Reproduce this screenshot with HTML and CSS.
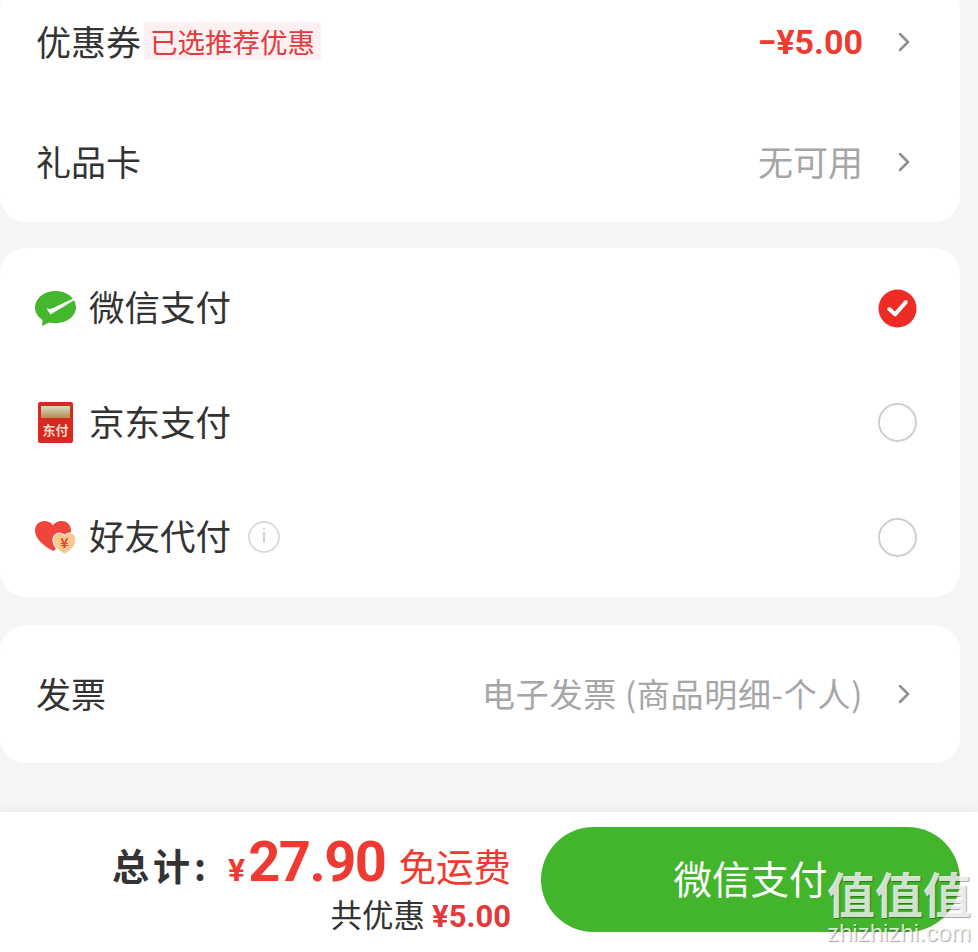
FILE: index.html
```html
<!DOCTYPE html>
<html lang="zh-CN">
<head>
    <meta charset="UTF-8">
    <meta name="viewport" content="width=device-width, initial-scale=1.0">
    <title>确认订单</title>
    <link rel="stylesheet" href="styles.css">
</head>
<body>

    <main class="content">
        <section class="card card-top">
            <div class="row row-tall">
                <span class="label">优惠券</span>
                <span class="tag">已选推荐优惠</span>
                <span class="value value-red">−¥5.00</span>
                <svg class="chevron" viewBox="0 0 12 20"><path d="M2 2l8 8-8 8"/></svg>
            </div>
            <div class="row row-tall">
                <span class="label">礼品卡</span>
                <span class="value value-gray">无可用</span>
                <svg class="chevron" viewBox="0 0 12 20"><path d="M2 2l8 8-8 8"/></svg>
            </div>
        </section>

        <section class="card card-pay">
            <div class="row row-pay">
                <svg class="pay-icon" viewBox="0 0 41 35">
                    <path fill="#44b72f" d="M20.500 0C9 0 0 7.300 0 16.500c0 5 2.900 9.500 7.500 12.500L7 35l7.200-3.600c2 .5 4.100.8 6.300.8C32 32.200 41 25 41 16.500 41 7.300 32 0 20.500 0z"/>
                    <path fill="#fff" d="M11.500 17.500l4.500.5 22-10.500 1.500 1.500-24 14.500z"/>
                </svg>
                <span class="label pay-label">微信支付</span>
                <svg class="radio" viewBox="0 0 40 40">
                    <circle cx="20" cy="20" r="19.500" fill="#ee2c24"/>
                    <path fill="none" stroke="#fff" stroke-width="4" stroke-linecap="round" stroke-linejoin="round" d="M11.500 20.500l6 5.500 11-12.500"/>
                </svg>
            </div>
            <div class="row row-pay">
                <div class="jd-icon">
                    <div class="jd-band"></div>
                    <span class="jd-text">东付</span>
                </div>
                <span class="label pay-label">京东支付</span>
                <span class="radio radio-off"></span>
            </div>
            <div class="row row-pay">
                <div class="heart-icon">
                    <svg viewBox="0 0 41 35">
                        <path fill="#f0453c" d="M18 31C9 26 0 19 0 10.500 0 4.500 4.500 1 9.500 1 13 1 16.500 2.500 18 5.500 19.500 2.500 23 1 26.500 1 32 1 36 5 36 10.500 36 19 27 26 18 31z"/>
                        <path fill="#fbc78e" stroke="#fff" stroke-width="1.200" d="M29.500 34.500C24 31.500 18 27 18 20c0-4.500 3-7 6.500-7 2 0 4 1 5 2.500 1-1.500 3-2.500 5-2.500 3.500 0 6.500 2.500 6.500 7 0 7-6 11.500-11.500 14.500z"/>
                    </svg>
                    <span class="heart-yen">¥</span>
                </div>
                <span class="label pay-label">好友代付</span>
                <span class="info">i</span>
                <span class="radio radio-off"></span>
            </div>
        </section>

        <section class="card card-invoice">
            <div class="row row-invoice">
                <span class="label">发票</span>
                <span class="value value-invoice">电子发票 (商品明细-个人)</span>
                <svg class="chevron" viewBox="0 0 12 20"><path d="M2 2l8 8-8 8"/></svg>
            </div>
        </section>
    </main>

    <footer class="bottom-bar">
        <div class="summary">
            <div class="total-line">
                <span class="total-label">总计:</span>
                <span class="total-yen">¥</span>
                <span class="total-num">27.90</span>
                <span class="total-free">免运费</span>
            </div>
            <div class="saved-line">
                <span>共优惠</span>
                <span class="saved-num">¥5.00</span>
            </div>
        </div>
        <button class="pay-btn">微信支付</button>
    </footer>

    <div class="watermark">
        <div class="watermark-big">值值值</div>
        <div class="watermark-small">zhizhizhi.com</div>
    </div>

</body>
</html>
```

FILE: styles.css
```css
* {
    box-sizing: border-box;
}

html, body {
    height: 100%;
}

body {
    font-family: "Noto Sans CJK SC", "Noto Sans", sans-serif;
    margin: 0;
    background-color: #f5f5f5;
    color: #333;
    display: flex;
    flex-direction: column;
    overflow: hidden;
}

.content {
    flex: 1;
    min-height: 0;
    padding-right: 18px;
}

.card {
    background-color: #fff;
    border-radius: 26px;
    margin-bottom: 28px;
}

.card-top {
    margin-top: -18px;
    margin-bottom: 26px;
}

.card-pay {
    padding: 3px 0 2.500px;
}

.row {
    display: flex;
    align-items: center;
    padding: 0 50px 0 36px;
}

.row-tall {
    height: 120px;
}

.row-pay {
    height: 114.500px;
    padding: 0 43px 0 35px;
}

.row-invoice {
    height: 138px;
}

.label {
    font-size: 35px;
    line-height: 1.2;
    padding-bottom: 3px;
    color: #333;
}

.pay-label {
    font-size: 35.500px;
    margin-left: 13px;
}

.tag {
    margin-left: 3px;
    margin-bottom: 3px;
    padding: 0 6px;
    height: 38px;
    line-height: 38px;
    font-size: 27.500px;
    color: #e33b3f;
    background-color: #fdf0f0;
    white-space: nowrap;
}

.value {
    margin-left: auto;
    margin-right: 35px;
    padding-bottom: 3px;
    white-space: nowrap;
}

.value-red {
    font-family: Roboto, sans-serif;
    font-size: 34px;
    font-weight: 700;
    padding-bottom: 0;
    color: #ee3a30;
}

.value-gray {
    font-size: 35px;
    color: #a6a6a6;
}

.value-invoice {
    font-size: 33px;
    letter-spacing: 0.700px;
    color: #a6a6a6;
}

.chevron {
    width: 12px;
    height: 20px;
    flex-shrink: 0;
    fill: none;
    stroke: #8f8f8f;
    stroke-width: 2.500;
    stroke-linecap: round;
    stroke-linejoin: round;
}

.pay-icon {
    width: 41px;
    height: 35px;
    flex-shrink: 0;
}

.radio {
    width: 39px;
    height: 39px;
    flex-shrink: 0;
    margin-left: auto;
}

.radio-off {
    border: 2.500px solid #cfcfcf;
    border-radius: 50%;
}

.jd-icon {
    width: 35px;
    height: 41px;
    margin-left: 3px;
    margin-right: 3px;
    flex-shrink: 0;
    background-color: #d8281f;
    border-radius: 2px;
    padding: 4px 3px 0;
    display: flex;
    flex-direction: column;
    align-items: center;
}

.jd-band {
    width: 100%;
    height: 12px;
    background: linear-gradient(180deg, #dcd9c8, #b48d4f);
}

.jd-text {
    margin-top: 4px;
    font-size: 13px;
    line-height: 16px;
    font-weight: 700;
    color: #f9d9c9;
    white-space: nowrap;
}

.heart-icon {
    position: relative;
    width: 41px;
    height: 35px;
    flex-shrink: 0;
}

.heart-icon svg {
    display: block;
    width: 100%;
    height: 100%;
}

.heart-yen {
    position: absolute;
    left: 23px;
    top: 14px;
    width: 13px;
    font-size: 14px;
    line-height: 16px;
    font-weight: 700;
    text-align: center;
    color: #d9482c;
}

.info {
    width: 32px;
    height: 32px;
    margin-left: 17px;
    border: 2px solid #dcdcdc;
    border-radius: 50%;
    font-family: "Liberation Sans", sans-serif;
    font-size: 20px;
    line-height: 27px;
    text-align: center;
    color: #cfcfcf;
}

.bottom-bar {
    height: 140px;
    flex-shrink: 0;
    background-color: #fff;
    padding: 15px 18px 20px 0;
    display: flex;
    justify-content: flex-end;
    align-items: flex-start;
    gap: 30px;
    box-shadow: 0 -3px 8px rgba(0, 0, 0, 0.04);
}

.summary {
    display: flex;
    flex-direction: column;
    align-items: flex-end;
}

.total-line {
    display: flex;
    align-items: baseline;
    height: 62px;
    margin-top: 2px;
    white-space: nowrap;
}

.total-label {
    font-size: 37px;
    font-weight: 700;
    letter-spacing: 4px;
    color: #333;
    margin-right: 18px;
}

.total-yen {
    font-family: Roboto, sans-serif;
    font-size: 32px;
    font-weight: 700;
    color: #ee3a30;
    margin-right: 3px;
}

.total-num {
    font-family: Roboto, sans-serif;
    font-size: 56px;
    font-weight: 700;
    letter-spacing: -1.500px;
    color: #ee3a30;
}

.total-free {
    font-size: 37.500px;
    color: #ee3a30;
    margin-left: 13px;
}

.saved-line {
    display: flex;
    align-items: baseline;
    gap: 7px;
    font-size: 31.500px;
    line-height: 44px;
    color: #333;
}

.saved-num {
    font-family: Roboto, sans-serif;
    font-size: 31px;
    font-weight: 700;
    color: #e23a3c;
}

.pay-btn {
    width: 419px;
    height: 105px;
    border: none;
    border-radius: 53px;
    background-color: #43b52d;
    color: #fff;
    font-family: inherit;
    font-size: 38.500px;
    padding: 0 0 6px;
}

.watermark {
    position: absolute;
    right: 7px;
    bottom: 8px;
    width: 144px;
    text-align: center;
    color: rgba(255, 255, 255, 0.78);
    text-shadow: 1px 1px 1px rgba(0, 0, 0, 0.35);
}

.watermark-big {
    font-size: 48px;
    line-height: 56px;
    font-weight: 700;
    margin-bottom: 2px;
    white-space: nowrap;
}

.watermark-small {
    font-family: "Liberation Sans", sans-serif;
    font-size: 24px;
    line-height: 22px;
    white-space: nowrap;
}
```
